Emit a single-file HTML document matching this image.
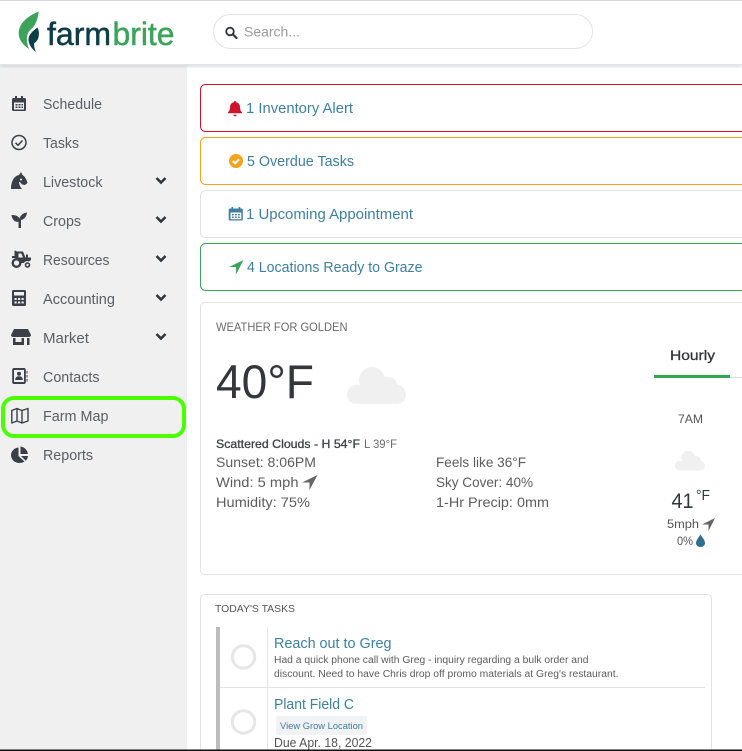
<!DOCTYPE html>
<html lang="en"><head><meta charset="utf-8"><title>Farmbrite</title>
<style>
html,body{margin:0;padding:0;background:#fff;width:742px;height:751px;overflow:hidden}
svg{display:block}
text{font-family:"Liberation Sans",sans-serif;white-space:pre}
.n{font-size:14.5px;fill:#5a5e64}
.a{font-size:14.5px;fill:#3f7f9f}
.w{font-size:14px;fill:#5c5c5c}
.i{fill:#3b3f47}
</style></head><body>
<svg width="742" height="751" viewBox="0 0 742 751" xmlns="http://www.w3.org/2000/svg">
<defs><filter id="s" x="-5%" y="-20%" width="110%" height="160%"><feGaussianBlur stdDeviation="2.5"/></filter></defs>
<!-- sidebar -->
<rect x="0" y="64" width="187" height="687" fill="#f0f0f0"/>
<!-- header -->
<rect x="0" y="62" width="742" height="4" fill="#c8ccd2" filter="url(#s)"/>
<rect x="0" y="0" width="742" height="65" fill="#fff"/>
<rect x="0" y="0" width="742" height="1" fill="#d8d8d8"/>
<rect x="0" y="64" width="742" height="1" fill="#e4e4e4"/>
<!-- logo -->
<path d="M38.700 11.500C30 15 19 22 18.700 33C18.700 40 23 45 29 49C27 44 26 38 28 33C31 28 37 27 38.700 11.500Z" fill="#3da35a"/>
<path d="M37.500 27.500C40 33 39.500 40 34 43.500C34 47 35 50 36 52C32 49 29 45 28.500 40C28.500 34 33 31 37.500 27.500Z" fill="#0e3f47"/>
<text x="47" y="45" font-size="32" fill="#0f3d47" stroke="#0f3d47" stroke-width=".5" textLength="64" lengthAdjust="spacingAndGlyphs">farm</text>
<text x="112.500" y="45" font-size="32" fill="#3da35a" stroke="#3da35a" stroke-width=".5" textLength="62" lengthAdjust="spacingAndGlyphs">brite</text>
<!-- search -->
<rect x="213.500" y="14.500" width="379" height="34" rx="17" fill="#fff" stroke="#e2e2e2"/>
<circle cx="230" cy="31.500" r="3.800" fill="none" stroke="#33373d" stroke-width="1.800"/>
<path d="M232.800 34.300L236.500 38" stroke="#33373d" stroke-width="2.200" stroke-linecap="round"/>
<text x="244" y="36.500" font-size="14" fill="#9a9a9a" textLength="56" lengthAdjust="spacingAndGlyphs">Search...</text>

<!-- nav icons -->
<g class="i">
<path fill-rule="evenodd" d="M15 96h2v2h4v-2h2v2h1.500c1 0 1.500.7 1.500 1.500v10c0 .9-.6 1.500-1.500 1.500h-11c-.9 0-1.500-.6-1.500-1.500v-10c0-.8.500-1.500 1.500-1.500H15zM14 102.500v7h10v-7zM15.500 104h2v1.500h-2zM18.500 104h2v1.500h-2zM21.500 104h1.500v1.500h-1.500zM15.500 106.500h2v1.500h-2zM18.500 106.500h2v1.500h-2zM21.500 106.500h1.500v1.500h-1.500z"/>
<circle cx="19" cy="142.500" r="7" fill="none" stroke="#3b3f47" stroke-width="1.500"/>
<path d="M15.500 142.800l2.500 2.500 4.500-4.800" fill="none" stroke="#3b3f47" stroke-width="1.500"/>
<path fill-rule="evenodd" d="M11 189c0-8 3-13 8-14l2-3 1.500 3c2 1 4 4 5 8l-2.500 2-3-.5-2-2.500h-1c0 2 1 5 3 7zM21 178.500a1 1 0 1 0 .01 0z"/>
<path d="M18.500 228v-6c-3.500 0-6.500-2-7-7 3.500 0 6.500 .5 8 3.500 1-3.500 3.500-5.500 7.500-6-.5 4.500-3 7-6 7.500v8z"/>
<path fill-rule="evenodd" d="M17 251.500h6l2.500 6h.5v-3h2v3h3v2.500l-2 1.500c-2-.8-4-.3-5 1.500h-4c-.3-3-2.500-5-5-5s-2.500 .2-3 .5v-2.500h2.500v-5c0-.3.200-.5 .5-.5zM18.500 253.500v4h4.500l-1.700-4z"/>
<circle cx="16.500" cy="263" r="3.800" fill="none" stroke="#3b3f47" stroke-width="2.400"/>
<circle cx="27.500" cy="265" r="2" fill="none" stroke="#3b3f47" stroke-width="1.600"/>
<path fill-rule="evenodd" d="M13.500 290h11c.9 0 1.500.6 1.500 1.500v13c0 .9-.6 1.500-1.500 1.500h-11c-.9 0-1.500-.6-1.500-1.500v-13c0-.9.600-1.500 1.500-1.500zM14 292v3.500h10V292zM14.500 298v2h2.200v-2zM18 298v2h2.200v-2zM21.500 298v2h2.200v-2zM14.500 301.500v2h2.200v-2zM18 301.500v2h2.200v-2zM21.500 301.500v2h2.200v-2z"/>
<path d="M14 329h14l3 6c0 1.300-1 2-2.500 2h-15c-1.500 0-2.500-.7-2.500-2z"/>
<path d="M13 338h2.500v4h6v-4H24v7H13zM27 338h2.500v7H27z"/>
<path fill-rule="evenodd" d="M14 368h10c1 0 1.800.8 1.800 1.800v12.400c0 1-.8 1.800-1.800 1.800H14c-1 0-1.800-.8-1.800-1.800v-12.400c0-1 .8-1.800 1.800-1.800zM14 370v12h10v-12zM26.500 371h1v2.500h-1zM26.500 375h1v2.500h-1zM26.500 379h1v2.500h-1z"/>
<circle cx="19" cy="373.800" r="2"/>
<path d="M15.200 380c0-2.500 1.500-3.700 3.800-3.700s3.800 1.200 3.800 3.700z"/>
<path d="M11.800 410.500l5.200-2 5 2 6-2v12.500l-6 2-5-2-5.200 2zM17 408.500v12.500M22 410.500v12.500" fill="none" stroke="#3b3f47" stroke-width="1.400" stroke-linejoin="round"/>
<path d="M18.500 447.500v8.500l6 5.500c-1.500 1-3.300 1.500-5 1.500-4.500 0-8.500-3.500-8.500-7.800 0-4 3.300-7.300 7.500-7.700z"/>
<path d="M20.500 446.500c3.700 .3 7 3.500 7.300 7.500h-7.300z"/>
<path d="M21 456h7c-.3 1.800-1 3.500-2.200 4.800z"/>
</g>
<!-- nav labels -->
<text class="n" x="43" y="109" textLength="59" lengthAdjust="spacingAndGlyphs">Schedule</text>
<text class="n" x="43" y="148" textLength="36" lengthAdjust="spacingAndGlyphs">Tasks</text>
<text class="n" x="43" y="187" textLength="59.500" lengthAdjust="spacingAndGlyphs">Livestock</text>
<text class="n" x="43" y="226" textLength="38" lengthAdjust="spacingAndGlyphs">Crops</text>
<text class="n" x="43" y="265" textLength="66.500" lengthAdjust="spacingAndGlyphs">Resources</text>
<text class="n" x="43" y="304" textLength="72" lengthAdjust="spacingAndGlyphs">Accounting</text>
<text class="n" x="43" y="343" textLength="46" lengthAdjust="spacingAndGlyphs">Market</text>
<text class="n" x="43" y="382" textLength="56.500" lengthAdjust="spacingAndGlyphs">Contacts</text>
<text class="n" x="43" y="421" textLength="65.500" lengthAdjust="spacingAndGlyphs">Farm Map</text>
<text class="n" x="43" y="460" textLength="50" lengthAdjust="spacingAndGlyphs">Reports</text>
<g fill="none" stroke="#33373d" stroke-width="2.600">
<path d="M156.500 178l4.500 4.500 4.500-4.500"/>
<path d="M156.500 217l4.500 4.500 4.500-4.500"/>
<path d="M156.500 256l4.500 4.500 4.500-4.500"/>
<path d="M156.500 295l4.500 4.500 4.500-4.500"/>
<path d="M156.500 334l4.500 4.500 4.500-4.500"/>
</g>
<!-- highlight -->
<rect x="3" y="398" width="181" height="38" rx="11" fill="none" stroke="#4cff00" stroke-width="4"/>

<!-- alerts -->
<rect x="200.500" y="84.500" width="600" height="47" rx="5" fill="#fff" stroke="#d0142c"/>
<rect x="200.500" y="137.500" width="600" height="47" rx="5" fill="#fff" stroke="#f5a31a"/>
<rect x="200.500" y="190.500" width="600" height="47" rx="5" fill="#fff" stroke="#e3e3e3"/>
<rect x="200.500" y="243.500" width="600" height="47" rx="5" fill="#fff" stroke="#3da35a"/>
<path d="M235 101c.8 0 1.200.6 1.200 1.200 2.300.5 3.800 2.300 3.800 4.800 0 3 .8 4 2 5.300v1h-14v-1c1.200-1.300 2-2.300 2-5.300 0-2.500 1.500-4.300 3.800-4.800 0-.6.400-1.200 1.200-1.200zM233.200 114.700h3.600c0 1-.8 1.600-1.800 1.600s-1.800-.6-1.800-1.600z" fill="#d0142c"/>
<circle cx="236" cy="161" r="7" fill="#f5a31a"/>
<path d="M232.800 161l2.300 2.300 4-4" fill="none" stroke="#fff" stroke-width="2"/>
<path fill-rule="evenodd" d="M231.500 207h1.600v1.500h5.500V207h1.600v1.500h1.300c.8 0 1.300.6 1.300 1.300v9.400c0 .8-.5 1.300-1.300 1.300h-11.500c-.8 0-1.300-.5-1.300-1.300v-9.400c0-.7.500-1.300 1.300-1.300h1.500zM230.500 212.500v6.800h10.800v-6.800zM232 214h1.800v1.400H232zM235 214h1.800v1.400H235zM238 214h1.800v1.400H238zM232 216.500h1.800v1.400H232zM235 216.500h1.800v1.400H235zM238 216.500h1.800v1.400H238z" fill="#3f7f9f"/>
<path d="M243.500 260L229 267h7v7.500z" fill="#3da35a"/>
<text class="a" x="246" y="113" textLength="107" lengthAdjust="spacingAndGlyphs">1 Inventory Alert</text>
<text class="a" x="247" y="166" textLength="107" lengthAdjust="spacingAndGlyphs">5 Overdue Tasks</text>
<text class="a" x="246" y="219" textLength="167" lengthAdjust="spacingAndGlyphs">1 Upcoming Appointment</text>
<text class="a" x="247" y="272" textLength="175.500" lengthAdjust="spacingAndGlyphs">4 Locations Ready to Graze</text>

<!-- weather -->
<rect x="200.500" y="302.500" width="600" height="272" rx="4" fill="#fff" stroke="#e3e3e3"/>
<text x="216" y="331" font-size="12" fill="#6a6a6a" textLength="131.500" lengthAdjust="spacingAndGlyphs">WEATHER FOR GOLDEN</text>
<text x="216" y="398" font-size="47" fill="#33363a" textLength="98" lengthAdjust="spacingAndGlyphs">40°F</text>
<g fill="#f0f0f0"><rect x="347" y="385" width="59" height="19" rx="9.500"/><circle cx="372" cy="380" r="13"/><circle cx="388" cy="387" r="10"/></g>
<text x="216" y="448" font-size="12" fill="#3f4246" stroke="#3f4246" stroke-width=".3" textLength="144" lengthAdjust="spacingAndGlyphs">Scattered Clouds - H 54°F</text>
<text x="364" y="448" font-size="12" fill="#6a6a6a" textLength="33" lengthAdjust="spacingAndGlyphs">L 39°F</text>
<text class="w" x="216" y="467" textLength="100" lengthAdjust="spacingAndGlyphs">Sunset: 8:06PM</text>
<text class="w" x="216" y="487" textLength="82.500" lengthAdjust="spacingAndGlyphs">Wind: 5 mph</text>
<text class="w" x="216" y="507" textLength="94" lengthAdjust="spacingAndGlyphs">Humidity: 75%</text>
<text class="w" x="436" y="467" textLength="90" lengthAdjust="spacingAndGlyphs">Feels like 36°F</text>
<text class="w" x="436" y="487" textLength="97" lengthAdjust="spacingAndGlyphs">Sky Cover: 40%</text>
<text class="w" x="436" y="507" textLength="113" lengthAdjust="spacingAndGlyphs">1-Hr Precip: 0mm</text>
<path d="M317.500 475L302 482.500h7.500V490z" fill="#666"/>

<!-- hourly -->
<text x="670" y="360" font-size="14" fill="#33363a" stroke="#33363a" stroke-width=".3" textLength="45" lengthAdjust="spacingAndGlyphs">Hourly</text>
<rect x="730" y="377" width="12" height="1" fill="#ddd"/>
<rect x="654" y="375" width="76" height="3" fill="#2fa650"/>
<text x="678" y="423" font-size="12" fill="#555" textLength="25" lengthAdjust="spacingAndGlyphs">7AM</text>
<g fill="#f0f0f0"><rect x="675" y="461" width="30" height="9.500" rx="4.700"/><circle cx="688" cy="457.500" r="6.600"/><circle cx="696" cy="461" r="5"/></g>
<text x="671.500" y="508" font-size="21" fill="#33363a" textLength="22" lengthAdjust="spacingAndGlyphs">41</text>
<text x="696" y="500" font-size="15" fill="#33363a" textLength="14" lengthAdjust="spacingAndGlyphs">°F</text>
<text x="667" y="528" font-size="11.500" fill="#555" textLength="32" lengthAdjust="spacingAndGlyphs">5mph</text>
<path d="M715 518l-13 6.500h6.500v6.500z" fill="#666"/>
<text x="677" y="545" font-size="12" fill="#555" textLength="16" lengthAdjust="spacingAndGlyphs">0%</text>
<path d="M700.500 534c.5 2.500 4.500 5.500 4.500 9 0 2.400-2 4-4.500 4s-4.500-1.600-4.500-4c0-3.500 4-6.500 4.500-9z" fill="#2f6f8f"/>

<!-- tasks -->
<rect x="200.500" y="594.500" width="511" height="170" rx="4" fill="#fff" stroke="#e3e3e3"/>
<text x="215" y="612" font-size="10.500" fill="#555" textLength="80" lengthAdjust="spacingAndGlyphs">TODAY'S TASKS</text>
<rect x="216" y="627" width="4" height="124" fill="#bdbdbd"/>
<rect x="267" y="627" width="1" height="124" fill="#e6e6e6"/>
<rect x="220" y="687" width="485" height="1" fill="#e3e3e3"/>
<circle cx="243.500" cy="657" r="11.200" fill="none" stroke="#e6e6e6" stroke-width="3"/>
<circle cx="243.500" cy="722" r="11.200" fill="none" stroke="#e6e6e6" stroke-width="3"/>
<text class="a" x="274" y="648" textLength="117.500" lengthAdjust="spacingAndGlyphs">Reach out to Greg</text>
<text x="274" y="663" font-size="10" fill="#5c5c5c" textLength="314.500" lengthAdjust="spacingAndGlyphs">Had a quick phone call with Greg - inquiry regarding a bulk order and</text>
<text x="274" y="677" font-size="10" fill="#5c5c5c" textLength="344.500" lengthAdjust="spacingAndGlyphs">discount. Need to have Chris drop off promo materials at Greg's restaurant.</text>
<text class="a" x="274" y="709" textLength="80" lengthAdjust="spacingAndGlyphs">Plant Field C</text>
<rect x="276" y="716" width="91" height="19" rx="2" fill="#f0f2f3"/>
<text x="280" y="729" font-size="9.500" fill="#3f7f9f" textLength="83" lengthAdjust="spacingAndGlyphs">View Grow Location</text>
<text x="274" y="747" font-size="12.500" fill="#555" textLength="98" lengthAdjust="spacingAndGlyphs">Due Apr. 18, 2022</text>
<!-- bottom edge -->
<rect x="0" y="749.500" width="742" height="1.500" fill="#111"/>
</svg>
</body></html>
